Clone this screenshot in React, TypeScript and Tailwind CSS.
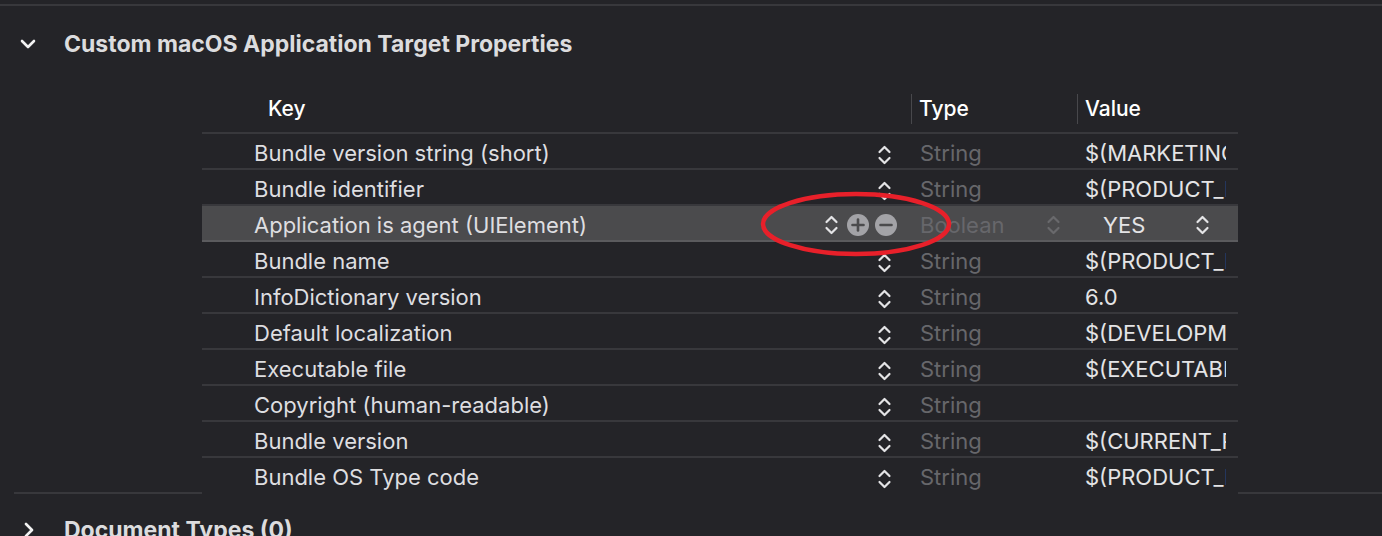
import React from 'react';

type Row = {
  key: string;
  type: string;
  value: string;
  selected?: boolean;
};

const rows: Row[] = [
  { key: 'Bundle version string (short)', type: 'String', value: '$(MARKETING_VERSION)' },
  { key: 'Bundle identifier', type: 'String', value: '$(PRODUCT_BUNDLE_IDENTIFIER)' },
  { key: 'Application is agent (UIElement)', type: 'Boolean', value: 'YES', selected: true },
  { key: 'Bundle name', type: 'String', value: '$(PRODUCT_NAME)' },
  { key: 'InfoDictionary version', type: 'String', value: '6.0' },
  { key: 'Default localization', type: 'String', value: '$(DEVELOPMENT_LANGUAGE)' },
  { key: 'Executable file', type: 'String', value: '$(EXECUTABLE_NAME)' },
  { key: 'Copyright (human-readable)', type: 'String', value: '' },
  { key: 'Bundle version', type: 'String', value: '$(CURRENT_PROJECT_VERSION)' },
  { key: 'Bundle OS Type code', type: 'String', value: '$(PRODUCT_BUNDLE_PACKAGE_TYPE)' },
];

const Stepper = ({ className = 'text-[#e4e4e6]' }: { className?: string }) => (
  <svg width="15" height="20" viewBox="0 0 15 20" className={className} fill="none">
    <polyline points="2.5,7 7.5,2 12.5,7" stroke="currentColor" strokeWidth="2.2" strokeLinecap="round" strokeLinejoin="round" />
    <polyline points="2.5,13 7.5,18 12.5,13" stroke="currentColor" strokeWidth="2.2" strokeLinecap="round" strokeLinejoin="round" />
  </svg>
);

const CircleButton = ({ plus }: { plus?: boolean }) => (
  <svg width="22" height="22" viewBox="0 0 22 22">
    <circle cx="11" cy="11" r="11" fill="#a3a3a7" />
    <line x1="5.5" y1="11" x2="16.5" y2="11" stroke="#4b4b4d" strokeWidth="2.6" strokeLinecap="round" />
    {plus && <line x1="11" y1="5.5" x2="11" y2="16.5" stroke="#4b4b4d" strokeWidth="2.6" strokeLinecap="round" />}
  </svg>
);

const TableRow = ({ row, last }: { row: Row; last: boolean }) => {
  const border = last ? '' : row.selected ? 'border-b-2 border-[#5b5b5e]' : 'border-b-2 border-[#38383c]';
  return (
    <div className={`flex pt-[4px] ${last ? 'h-[34px]' : 'h-[36px]'} ${border} ${row.selected ? 'bg-[#4b4b4d]' : ''}`}>
      <div className={`flex w-[709px] items-center pl-[52px] ${row.selected ? 'pr-[14px]' : 'pr-[19px]'}`}>
        <span className="flex-1 whitespace-nowrap text-[22px] text-[#dedee0]">{row.key}</span>
        {row.selected ? (
          <div className="flex items-center">
            <Stepper />
            <div className="ml-[8px]">
              <CircleButton plus />
            </div>
            <div className="ml-[6px]">
              <CircleButton />
            </div>
          </div>
        ) : (
          <div className="pt-[4px]">
            <Stepper />
          </div>
        )}
      </div>
      <div className="flex w-[166px] items-center pl-[9px] pr-[16px]">
        <span className="flex-1 text-[22px] text-[#67676b]">{row.type}</span>
        {row.selected && <Stepper className="text-[#69696c]" />}
      </div>
      {row.selected ? (
        <div className="flex w-[161px] items-center pl-[26px] pr-[28px]">
          <span className="flex-1 text-[22px] text-[#e4e4e6]">{row.value}</span>
          <Stepper />
        </div>
      ) : (
        <div className="flex w-[161px] items-center overflow-hidden pl-[8px] pr-[12px]">
          <span className="block overflow-hidden whitespace-nowrap text-[22px] text-[#e4e4e6]">{row.value}</span>
        </div>
      )}
    </div>
  );
};

export default function App() {
  return (
    <div
      className="relative h-[536px] w-[1382px] overflow-hidden bg-[#242428]"
      style={{ fontFamily: 'Inter, "Noto Sans", sans-serif' }}
    >
      <div className="h-[4px]" />
      <div className="h-[2px] bg-[#38383c]" />

      {/* Section header */}
      <div className="flex h-[76px] items-center">
        <div className="flex w-[64px] justify-center pl-[8px] pr-[16px]">
          <svg width="16" height="10" viewBox="0 0 16 10" fill="none">
            <polyline points="2,2 8,8 14,2" stroke="#f2f2f2" strokeWidth="2.6" strokeLinecap="round" strokeLinejoin="round" />
          </svg>
        </div>
        <span className="text-[23px] font-bold text-[#dcdcde]">Custom macOS Application Target Properties</span>
      </div>

      {/* Table */}
      <div className="ml-[202px] w-[1036px]">
        <div className="flex h-[52px] items-center border-b-2 border-[#38383c] pt-[4px]">
          <div className="w-[709px] pl-[66px] text-[21px] font-medium text-white">Key</div>
          <div className="flex h-[30px] w-[166px] items-center border-l border-[#48484c] pl-[7px] text-[21px] font-medium text-white">
            Type
          </div>
          <div className="flex h-[30px] w-[161px] items-center border-l border-[#48484c] pl-[7px] text-[21px] font-medium text-white">
            Value
          </div>
        </div>
        {rows.map((row, i) => (
          <TableRow key={row.key} row={row} last={i === rows.length - 1} />
        ))}
      </div>

      {/* Section separator */}
      <div className="flex h-[2px]">
        <div className="ml-[14px] w-[188px] bg-[#38383c]" />
        <div className="w-[1036px]" />
        <div className="flex-1 bg-[#38383c]" />
      </div>

      {/* Next section */}
      <div className="flex h-[68px] items-center pt-[4px]">
        <div className="flex w-[64px] justify-center pl-[10px] pr-[16px]">
          <svg width="10" height="16" viewBox="0 0 10 16" fill="none">
            <polyline points="2,2 8,8 2,14" stroke="#f2f2f2" strokeWidth="2.6" strokeLinecap="round" strokeLinejoin="round" />
          </svg>
        </div>
        <span className="text-[23px] font-bold text-[#dcdcde]">Document Types (0)</span>
      </div>

      {/* Red annotation ellipse */}
      <svg className="pointer-events-none absolute left-[758px] top-[190px]" width="200" height="70" viewBox="0 0 200 70" fill="none">
        <ellipse cx="98" cy="34" rx="93" ry="30" stroke="#e8202a" strokeWidth="4.5" />
      </svg>
    </div>
  );
}
